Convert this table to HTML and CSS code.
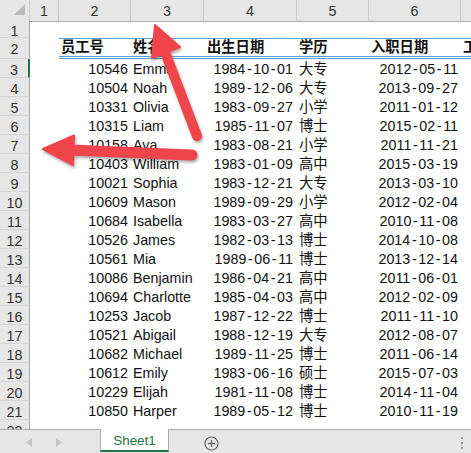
FILE: index.html
```html
<!DOCTYPE html>
<html lang="zh-CN">
<head>
<meta charset="utf-8">
<title>Sheet1</title>
<link rel="stylesheet" href="styles.css">
</head>
<body>
<div class="app">
  <div class="sheet">
    <div class="row colhead">
      <div class="corner"><svg width="11" height="11" viewBox="0 0 11 11"><polygon points="11,0 11,11 0,11" fill="#b8b8b8"/></svg></div>
      <div class="ch">1</div><div class="ch">2</div><div class="ch">3</div><div class="ch">4</div><div class="ch">5</div><div class="ch">6</div><div class="ch last"></div>
    </div>
    <div class="row r1"><div class="rh">1</div><div class="c"></div><div class="c"></div><div class="c"></div><div class="c"></div><div class="c"></div><div class="c"></div><div class="c"></div></div>
    <div class="row r2"><div class="rh">2</div><div class="c"></div><div class="c th">员工号</div><div class="c th">姓名</div><div class="c th">出生日期</div><div class="c th">学历</div><div class="c th">入职日期</div><div class="c th">工龄</div></div>
    <div class="row"><div class="rh sel">3</div><div class="c"></div><div class="c r">10546</div><div class="c">Emma</div><div class="c r d">1984<span class="h">-</span>10<span class="h">-</span>01</div><div class="c">大专</div><div class="c r">2012<span class="h">-</span>05<span class="h">-</span>11</div><div class="c"></div></div>
    <div class="row"><div class="rh">4</div><div class="c"></div><div class="c r">10504</div><div class="c">Noah</div><div class="c r d">1989<span class="h">-</span>12<span class="h">-</span>06</div><div class="c">大专</div><div class="c r">2013<span class="h">-</span>09<span class="h">-</span>27</div><div class="c"></div></div>
    <div class="row"><div class="rh">5</div><div class="c"></div><div class="c r">10331</div><div class="c">Olivia</div><div class="c r d">1983<span class="h">-</span>09<span class="h">-</span>27</div><div class="c">小学</div><div class="c r">2011<span class="h">-</span>01<span class="h">-</span>12</div><div class="c"></div></div>
    <div class="row"><div class="rh">6</div><div class="c"></div><div class="c r">10315</div><div class="c">Liam</div><div class="c r d">1985<span class="h">-</span>11<span class="h">-</span>07</div><div class="c">博士</div><div class="c r">2015<span class="h">-</span>02<span class="h">-</span>11</div><div class="c"></div></div>
    <div class="row"><div class="rh">7</div><div class="c"></div><div class="c r">10158</div><div class="c">Ava</div><div class="c r d">1983<span class="h">-</span>08<span class="h">-</span>21</div><div class="c">小学</div><div class="c r">2011<span class="h">-</span>11<span class="h">-</span>21</div><div class="c"></div></div>
    <div class="row"><div class="rh">8</div><div class="c"></div><div class="c r">10403</div><div class="c">William</div><div class="c r d">1983<span class="h">-</span>01<span class="h">-</span>09</div><div class="c">高中</div><div class="c r">2015<span class="h">-</span>03<span class="h">-</span>19</div><div class="c"></div></div>
    <div class="row"><div class="rh">9</div><div class="c"></div><div class="c r">10021</div><div class="c">Sophia</div><div class="c r d">1983<span class="h">-</span>12<span class="h">-</span>21</div><div class="c">大专</div><div class="c r">2013<span class="h">-</span>03<span class="h">-</span>10</div><div class="c"></div></div>
    <div class="row"><div class="rh">10</div><div class="c"></div><div class="c r">10609</div><div class="c">Mason</div><div class="c r d">1989<span class="h">-</span>09<span class="h">-</span>29</div><div class="c">小学</div><div class="c r">2012<span class="h">-</span>02<span class="h">-</span>04</div><div class="c"></div></div>
    <div class="row"><div class="rh">11</div><div class="c"></div><div class="c r">10684</div><div class="c">Isabella</div><div class="c r d">1983<span class="h">-</span>03<span class="h">-</span>27</div><div class="c">高中</div><div class="c r">2010<span class="h">-</span>11<span class="h">-</span>08</div><div class="c"></div></div>
    <div class="row"><div class="rh">12</div><div class="c"></div><div class="c r">10526</div><div class="c">James</div><div class="c r d">1982<span class="h">-</span>03<span class="h">-</span>13</div><div class="c">博士</div><div class="c r">2014<span class="h">-</span>10<span class="h">-</span>08</div><div class="c"></div></div>
    <div class="row"><div class="rh">13</div><div class="c"></div><div class="c r">10561</div><div class="c">Mia</div><div class="c r d">1989<span class="h">-</span>06<span class="h">-</span>11</div><div class="c">博士</div><div class="c r">2013<span class="h">-</span>12<span class="h">-</span>14</div><div class="c"></div></div>
    <div class="row"><div class="rh">14</div><div class="c"></div><div class="c r">10086</div><div class="c">Benjamin</div><div class="c r d">1986<span class="h">-</span>04<span class="h">-</span>21</div><div class="c">高中</div><div class="c r">2011<span class="h">-</span>06<span class="h">-</span>01</div><div class="c"></div></div>
    <div class="row"><div class="rh">15</div><div class="c"></div><div class="c r">10694</div><div class="c">Charlotte</div><div class="c r d">1985<span class="h">-</span>04<span class="h">-</span>03</div><div class="c">高中</div><div class="c r">2012<span class="h">-</span>02<span class="h">-</span>09</div><div class="c"></div></div>
    <div class="row"><div class="rh">16</div><div class="c"></div><div class="c r">10253</div><div class="c">Jacob</div><div class="c r d">1987<span class="h">-</span>12<span class="h">-</span>22</div><div class="c">博士</div><div class="c r">2011<span class="h">-</span>11<span class="h">-</span>10</div><div class="c"></div></div>
    <div class="row"><div class="rh">17</div><div class="c"></div><div class="c r">10521</div><div class="c">Abigail</div><div class="c r d">1988<span class="h">-</span>12<span class="h">-</span>19</div><div class="c">大专</div><div class="c r">2012<span class="h">-</span>08<span class="h">-</span>07</div><div class="c"></div></div>
    <div class="row"><div class="rh">18</div><div class="c"></div><div class="c r">10682</div><div class="c">Michael</div><div class="c r d">1989<span class="h">-</span>11<span class="h">-</span>25</div><div class="c">博士</div><div class="c r">2011<span class="h">-</span>06<span class="h">-</span>14</div><div class="c"></div></div>
    <div class="row"><div class="rh">19</div><div class="c"></div><div class="c r">10612</div><div class="c">Emily</div><div class="c r d">1983<span class="h">-</span>06<span class="h">-</span>16</div><div class="c">硕士</div><div class="c r">2015<span class="h">-</span>07<span class="h">-</span>03</div><div class="c"></div></div>
    <div class="row"><div class="rh">20</div><div class="c"></div><div class="c r">10229</div><div class="c">Elijah</div><div class="c r d">1981<span class="h">-</span>11<span class="h">-</span>08</div><div class="c">博士</div><div class="c r">2014<span class="h">-</span>11<span class="h">-</span>04</div><div class="c"></div></div>
    <div class="row"><div class="rh">21</div><div class="c"></div><div class="c r">10850</div><div class="c">Harper</div><div class="c r d">1989<span class="h">-</span>05<span class="h">-</span>12</div><div class="c">博士</div><div class="c r">2010<span class="h">-</span>11<span class="h">-</span>19</div><div class="c"></div></div>
    <div class="row"><div class="rh">22</div><div class="c"></div><div class="c"></div><div class="c"></div><div class="c"></div><div class="c"></div><div class="c"></div><div class="c"></div></div>
  </div>
  <div class="tabbar">
    <div class="nav">
      <svg width="6" height="9" viewBox="0 0 6 9"><polygon points="6,0 6,9 0,4.5" fill="#c4c4c4"/></svg>
      <svg width="6" height="9" viewBox="0 0 6 9"><polygon points="0,0 0,9 6,4.5" fill="#c4c4c4"/></svg>
    </div>
    <div class="tab">Sheet1</div>
    <div class="add"><svg width="15" height="15" viewBox="0 0 15 15"><circle cx="7.5" cy="7.5" r="6.5" fill="none" stroke="#6a6a6a" stroke-width="1.2"/><path d="M7.5 4v7M4 7.5h7" stroke="#6a6a6a" stroke-width="1.3"/></svg></div>
    <div class="spacer"></div>
    <div class="dots"><span></span><span></span><span></span></div>
  </div>
  <svg class="arrows" width="471" height="453" viewBox="0 0 471 453">
    <g fill="#f1454c" stroke="#f1454c" stroke-linejoin="round">
      <line x1="197" y1="136" x2="165" y2="52" stroke-width="10" stroke-linecap="round"/>
      <polygon points="180,47 155,25 152,58" stroke-width="2"/>
      <line x1="192" y1="155" x2="70" y2="150" stroke-width="11" stroke-linecap="round"/>
      <polygon points="74,135.5 43,149 73,165" stroke-width="2"/>
    </g>
  </svg>
</div>
</body>
</html>
```
FILE: styles.css
```css
html, body {
  margin: 0;
  padding: 0;
  background: #ffffff;
}
.app {
  position: relative;
  width: 471px;
  height: 453px;
  overflow: hidden;
  font-family: "Liberation Sans", "Noto Sans CJK SC", sans-serif;
  font-size: 14.3px;
  color: #111;
}
.sheet {
  height: 429px;
  overflow: hidden;
}
.row {
  display: grid;
  grid-template-columns: 30px 29px 72px 73px 93px 72px 92px 1fr;
  height: 19px;
  line-height: 19px;
}
.colhead {
  height: 20px;
  line-height: 20px;
}
.colhead > div {
  background: #e6e6e6;
  border-bottom: 1px solid #ababab;
  box-sizing: border-box;
  color: #333;
  text-align: center;
  padding-top: 1px;
}
.corner {
  border-right: 1px solid #c8c8c8;
  display: flex;
  align-items: flex-start;
  justify-content: flex-end;
  padding: 4px 4px 0 0 !important;
}
.ch {
  border-right: 1px solid #c8c8c8;
}
.ch.last {
  border-right: none;
}
.r1 {
  height: 18px;
  line-height: 18px;
}
.r2 {
  height: 21px;
}
.rh {
  background: #e6e6e6;
  border-right: 1px solid #ababab;
  border-bottom: 1px solid #d4d4d4;
  box-sizing: border-box;
  text-align: center;
  color: #333;
  padding-top: 2px;
  overflow: hidden;
}
.rh.sel {
  border-right: 2px solid #217346;
}
.c {
  padding: 1px 2px 0;
  white-space: nowrap;
  overflow: hidden;
  box-sizing: border-box;
}
.c.r {
  text-align: right;
  padding-right: 3px;
}
.c.d {
  padding-right: 4px;
}
.h {
  padding: 0 1.6px;
}
.r2 .c + .c {
  border-top: 1px solid #5b9bd5;
  border-bottom: 3px double #5b9bd5;
  line-height: 16px;
  padding-top: 0;
}
.th {
  font-weight: bold;
  padding-left: 2px;
}
.r2 .c:nth-child(5) {
  padding-left: 3px;
}
.tabbar {
  height: 24px;
  box-sizing: border-box;
  border-top: 1px solid #ababab;
  background: #e6e6e6;
  display: flex;
  align-items: center;
}
.nav {
  width: 100px;
  box-sizing: border-box;
  padding-left: 26px;
  display: flex;
  align-items: center;
  gap: 24px;
  margin-top: 2px;
}
.nav svg {
  display: block;
}
.tab {
  align-self: flex-start;
  margin-top: -1px;
  width: 69px;
  height: 23px;
  box-sizing: border-box;
  background: #ffffff;
  border-left: 1px solid #ababab;
  border-right: 1px solid #ababab;
  border-bottom: 2px solid #217346;
  color: #217346;
  font-size: 13.4px;
  text-align: center;
  line-height: 24px;
}
.add {
  margin-left: 35px;
  margin-top: 3px;
}
.add svg {
  display: block;
}
.spacer {
  flex: 1;
}
.dots {
  display: flex;
  flex-direction: column;
  gap: 3px;
  margin-right: 8px;
  margin-top: 2px;
}
.dots span {
  width: 2px;
  height: 2px;
  background: #9a9a9a;
}
.arrows {
  position: absolute;
  left: 0;
  top: 0;
  pointer-events: none;
  filter: drop-shadow(1px 2px 1.5px rgba(0, 0, 0, 0.35));
}
```
